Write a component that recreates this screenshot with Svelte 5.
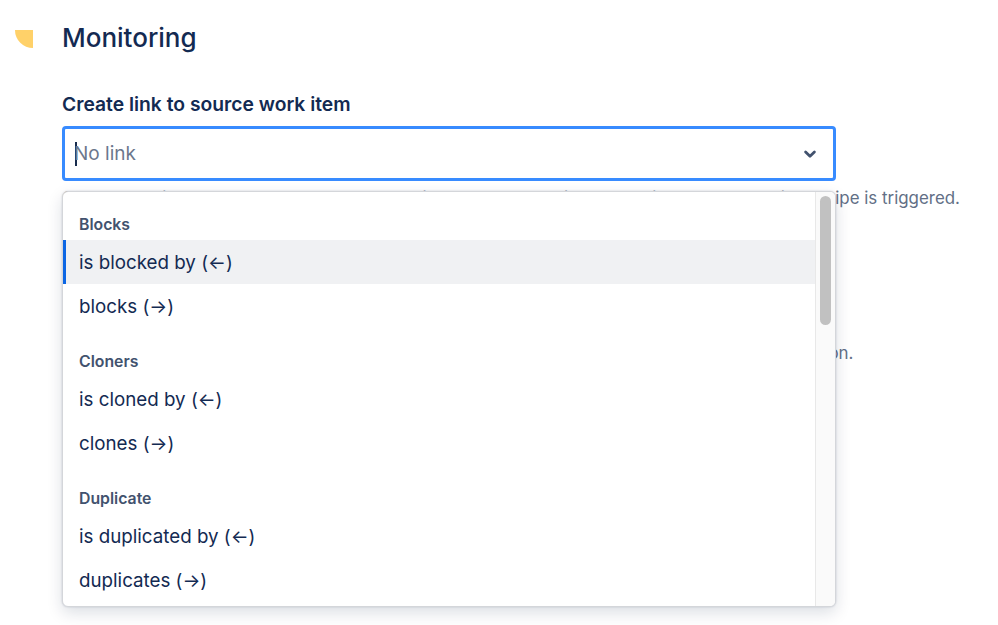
<script>
	const groups = [
		{ name: 'Blocks', options: ['is blocked by (←)', 'blocks (→)'] },
		{ name: 'Cloners', options: ['is cloned by (←)', 'clones (→)'] },
		{ name: 'Duplicate', options: ['is duplicated by (←)', 'duplicates (→)'] }
	];
	let active = 'is blocked by (←)';
</script>

<main>
	<aside>
		<div class="blob"></div>
	</aside>
	<section>
		<h1>Monitoring</h1>
		<div class="label">Create link to source work item</div>
		<div class="field">
			<div class="control">
				<span class="caret"></span>
				<span class="placeholder">No link</span>
				<svg width="24" height="24" viewBox="0 0 24 24">
					<path d="M7.6 10 12 14.2l4.4-4.2" fill="none" stroke="#42526e" stroke-width="2.8" stroke-linecap="round" stroke-linejoin="round" />
				</svg>
			</div>
			<div class="menu">
				<div class="list">
					{#each groups as group}
						<div class="group">
							<h2>{group.name}</h2>
							{#each group.options as option}
								<div class="option" class:active={option === active}>{option}</div>
							{/each}
						</div>
					{/each}
				</div>
				<div class="track"><div class="thumb"></div></div>
			</div>
		</div>
		<p class="help first">Choose the link type between a source work item and the new item each time the automation recipe is triggered.</p>
		<p class="help second">If you leave it empty, the new work item is created with no link to the source item in the automation.</p>
	</section>
</main>

<style>
	:global(body) {
		background: #fff;
		font-family: Inter, 'Noto Sans', sans-serif;
		color: #172b4d;
		overflow: hidden;
	}
	main {
		display: flex;
		height: 625px;
		overflow: hidden;
	}
	aside {
		width: 62px;
		flex: none;
		padding: 30px 0 0 15px;
		box-sizing: border-box;
	}
	.blob {
		width: 18px;
		height: 18px;
		background: #ffd169;
		border-bottom-left-radius: 18px;
	}
	section {
		width: 900px;
		flex: none;
	}
	h1 {
		margin: 20px 0 0;
		font-size: 26px;
		line-height: 36px;
		font-weight: 500;
		color: #132a52;
	}
	.label {
		margin-top: 36px;
		font-size: 19.3px;
		line-height: 24px;
		font-weight: 600;
		color: #132a52;
	}
	.field {
		position: relative;
		width: 774px;
		margin-top: 10px;
	}
	.control {
		display: flex;
		align-items: center;
		height: 55px;
		box-sizing: border-box;
		border: 3px solid #388bff;
		border-radius: 4px;
		padding: 0 11px 0 10px;
	}
	.caret {
		width: 2px;
		height: 24px;
		background: #172b4d;
		margin-right: -3px;
		flex: none;
	}
	.placeholder {
		flex: 1;
		font-size: 19px;
		color: #6b778c;
	}
	.menu {
		position: absolute;
		z-index: 2;
		top: 65px;
		left: 0;
		width: 774px;
		height: 416px;
		box-sizing: border-box;
		display: flex;
		background: #fff;
		border: 1px solid #d4d6da;
		border-radius: 6px;
		box-shadow: 0 6px 16px rgba(9, 30, 66, 0.14), 0 0 2px rgba(9, 30, 66, 0.2);
		overflow: hidden;
	}
	.list {
		flex: 1;
		padding-top: 20px;
	}
	.group + .group {
		margin-top: 21px;
	}
	h2 {
		margin: 0 0 3px;
		padding-left: 16px;
		font-size: 15.8px;
		line-height: 25px;
		font-weight: 600;
		color: #42526e;
	}
	.option {
		height: 44px;
		display: flex;
		align-items: center;
		padding-left: 16px;
		font-size: 18.75px;
		color: #132a52;
		box-sizing: border-box;
	}
	.option.active {
		background: #f0f1f3;
		box-shadow: inset 3px 0 0 #0c66e4;
	}
	.track {
		width: 20px;
		flex: none;
		background: #fafafa;
		border-left: 1px solid #e8e8e8;
		padding: 4px 0 0 4px;
		box-sizing: border-box;
	}
	.thumb {
		width: 11px;
		height: 129px;
		border-radius: 6px;
		background: #c1c1c1;
	}
	.help {
		margin: 0;
		font-size: 16.9px;
		line-height: 20px;
		color: #626f86;
		white-space: nowrap;
	}
	.first {
		margin-top: 7px;
	}
	.second {
		margin-top: 135px;
	}
</style>
